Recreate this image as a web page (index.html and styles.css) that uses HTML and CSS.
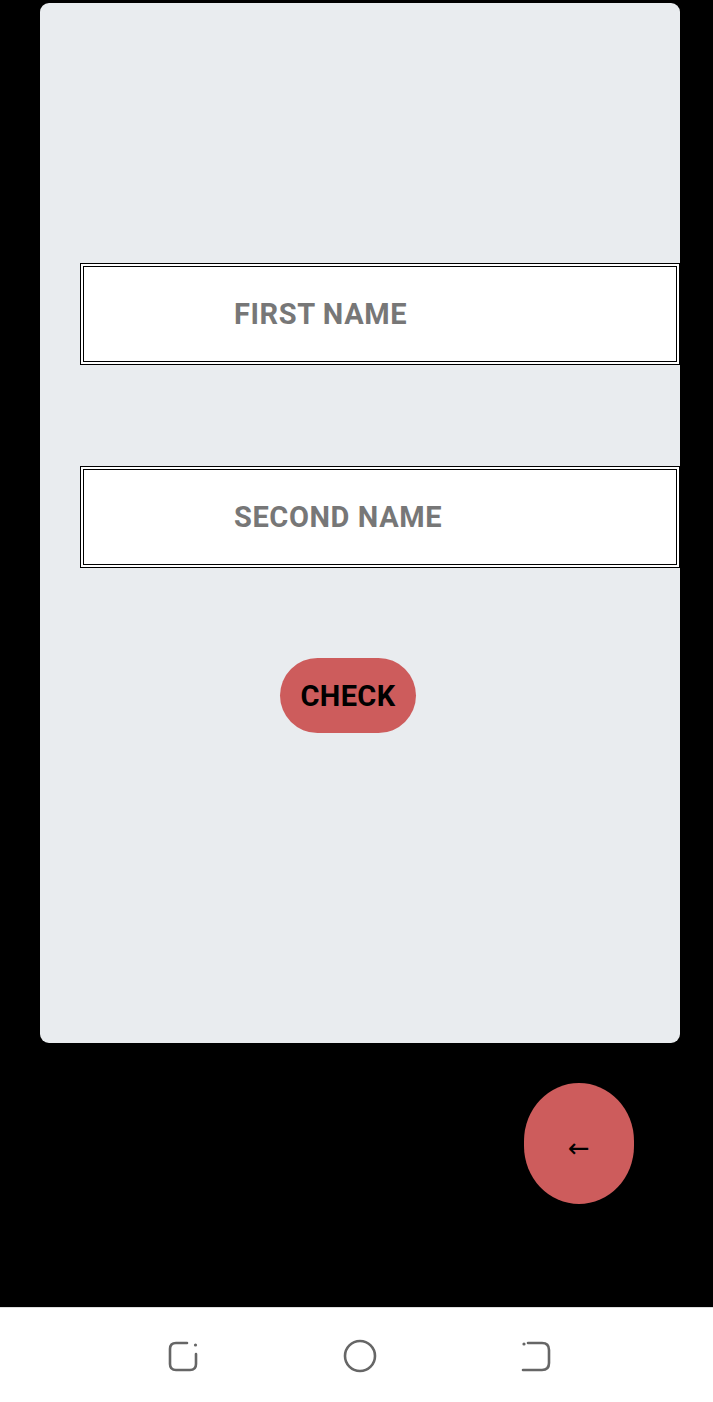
FILE: index.html
```html
<!DOCTYPE html>
<html>
<head>
<meta charset="utf-8">
<link rel="stylesheet" href="styles.css">
</head>
<body>
<div class="screen">
  <div class="card">
    <div class="field"><span class="label">FIRST NAME</span></div>
    <div class="field field-second"><span class="label">SECOND NAME</span></div>
    <button class="check">CHECK</button>
  </div>
  <div class="fab-row">
    <button class="fab">←</button>
  </div>
</div>
<nav class="navbar">
  <div class="nav-slot">
    <svg width="32" height="32" viewBox="0 0 32 32">
      <path d="M19 3 H8 Q2 3 2 9 V24 Q2 30 8 30 H22 Q28 30 28 24 V14" fill="none" stroke="#666" stroke-width="2.6" stroke-linecap="round"/>
      <circle cx="27.5" cy="5" r="1.6" fill="#666"/>
    </svg>
  </div>
  <div class="nav-slot">
    <svg width="34" height="34" viewBox="0 0 34 34">
      <circle cx="17" cy="17" r="15" fill="none" stroke="#666" stroke-width="2.6"/>
    </svg>
  </div>
  <div class="nav-slot">
    <svg width="32" height="32" viewBox="0 0 32 32">
      <path d="M8 3 H22 Q29 3 29 10 V23 Q29 30 22 30 H3" fill="none" stroke="#666" stroke-width="2.6" stroke-linecap="round"/>
      <circle cx="4" cy="4" r="1.6" fill="#666"/>
    </svg>
  </div>
</nav>
</body>
</html>
```
FILE: styles.css
```css
html, body {
  margin: 0;
  padding: 0;
  background: #000;
  font-family: Roboto, "Liberation Sans", sans-serif;
}
.screen {
  height: 1307px;
  display: flex;
  flex-direction: column;
}
.card {
  margin: 3px 0 0 40px;
  width: 640px;
  height: 1040px;
  box-sizing: border-box;
  background: #e9ecef;
  border-radius: 9px;
  padding: 260px 0 0 40px;
  display: flex;
  flex-direction: column;
  align-items: flex-start;
}
.field {
  width: 600px;
  height: 102px;
  box-sizing: border-box;
  border: 4px double #000;
  background: #fff;
  display: flex;
  align-items: center;
  padding-left: 150px;
}
.field-second {
  margin-top: 101px;
}
.label {
  color: #777;
  font-weight: 700;
  font-size: 29px;
  letter-spacing: 0.6px;
}
.check {
  margin: 90px 0 0 200px;
  width: 136px;
  height: 75px;
  border: none;
  border-radius: 38px;
  background: #cd5c5c;
  color: #000;
  font-family: Roboto, "Liberation Sans", sans-serif;
  font-weight: 700;
  font-size: 29px;
  letter-spacing: 0.4px;
  padding: 0;
}
.fab-row {
  padding: 40px 0 0 524px;
}
.fab {
  width: 110px;
  height: 121px;
  border: none;
  border-radius: 55px / 58px;
  background: #cd5c5c;
  color: #000;
  font-size: 26px;
  padding: 8px 0 0 0;
  font-family: "DejaVu Sans", sans-serif;
}
.navbar {
  height: 95px;
  background: #fff;
  border-top: 1px solid #ddd;
  box-sizing: border-box;
  display: flex;
  align-items: center;
  justify-content: center;
  gap: 136px;
  padding: 2px 0 0 7px;
}
.nav-slot {
  width: 40px;
  display: flex;
  justify-content: center;
}
.nav-slot svg {
  display: block;
}
```
